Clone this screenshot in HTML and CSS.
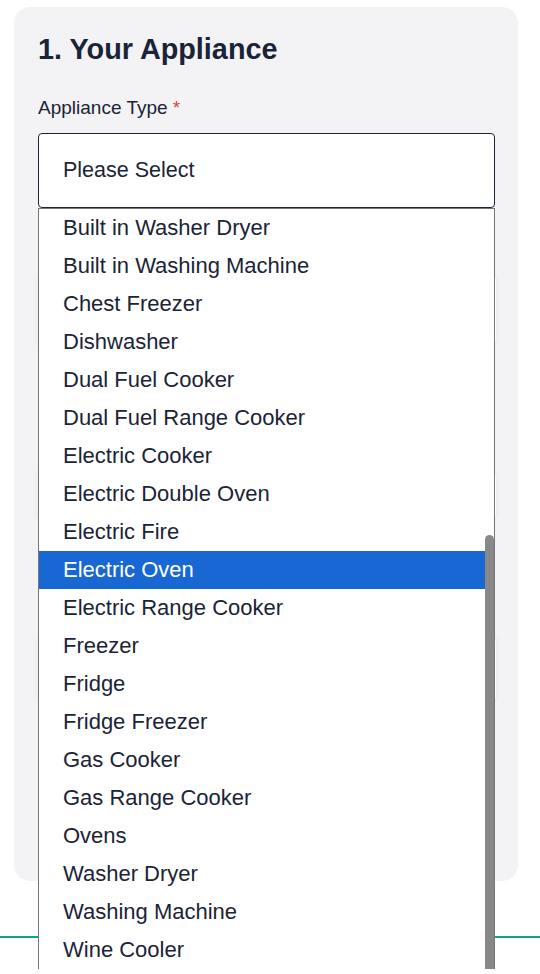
FILE: index.html
```html
<!DOCTYPE html>
<html lang="en">
<head>
<meta charset="utf-8">
<title>Your Appliance</title>
<link rel="stylesheet" href="styles.css">
</head>
<body>
<main class="page">
  <section class="card">
    <h2 class="card-title">1. Your Appliance</h2>
    <div class="field">
      <label class="field-label">Appliance Type <span class="req">*</span></label>
      <div class="select-wrap">
        <div class="select">Please Select</div>
        <ul class="listbox">
          <li class="opt">Built in Washer Dryer</li>
          <li class="opt">Built in Washing Machine</li>
          <li class="opt">Chest Freezer</li>
          <li class="opt">Dishwasher</li>
          <li class="opt">Dual Fuel Cooker</li>
          <li class="opt">Dual Fuel Range Cooker</li>
          <li class="opt">Electric Cooker</li>
          <li class="opt">Electric Double Oven</li>
          <li class="opt">Electric Fire</li>
          <li class="opt selected">Electric Oven</li>
          <li class="opt">Electric Range Cooker</li>
          <li class="opt">Freezer</li>
          <li class="opt">Fridge</li>
          <li class="opt">Fridge Freezer</li>
          <li class="opt">Gas Cooker</li>
          <li class="opt">Gas Range Cooker</li>
          <li class="opt">Ovens</li>
          <li class="opt">Washer Dryer</li>
          <li class="opt">Washing Machine</li>
          <li class="opt">Wine Cooler</li>
          <li class="thumb" aria-hidden="true"></li>
        </ul>
      </div>
    </div>
    <div class="ghost ghost-1"></div>
    <div class="ghost ghost-2"></div>
    <div class="ghost ghost-3"></div>
  </section>
  <div class="footer-rule"></div>
</main>
</body>
</html>
```

FILE: styles.css
```css
* { box-sizing: border-box; }
html, body {
  margin: 0;
  padding: 0;
  background: #ffffff;
}
body {
  font-family: "Liberation Sans", Arial, sans-serif;
  color: #1b2437;
  min-height: 974px;
  overflow: hidden;
}
.page {
  padding-top: 7px;
  min-height: 974px;
}
.card {
  margin: 0 22px 0 14px;
  background: #f3f3f5;
  border-radius: 16px;
  padding: 26px 24px 0 24px;
  height: 874px;
}
.card-title {
  margin: 0;
  font-size: 28.8px;
  line-height: 32px;
  font-weight: 700;
  color: #1b2437;
}
.field {
  margin-top: 32px;
}
.field-label {
  display: block;
  font-size: 19px;
  line-height: 22px;
  color: #1b2437;
}
.req {
  color: #d6453d;
}
.select-wrap {
  position: relative;
  margin-top: 14px;
  width: 457px;
  z-index: 5;
}
.select {
  height: 75px;
  border: 1px solid #1b2437;
  border-radius: 4px;
  background: #ffffff;
  padding-left: 24px;
  display: flex;
  align-items: center;
  font-size: 21.5px;
  color: #1b2437;
}
.listbox {
  position: absolute;
  top: 75px;
  left: 0;
  width: 457px;
  margin: 0;
  padding: 0;
  list-style: none;
  background: #ffffff;
  border: 1px solid #767676;
  border-bottom: none;
  height: 761px;
  overflow: hidden;
}
.opt {
  height: 38px;
  line-height: 38px;
  padding-left: 24px;
  font-size: 22px;
  color: #1b2437;
  white-space: nowrap;
}
.opt.selected {
  background: #1967d2;
  color: #ffffff;
}
.thumb {
  position: absolute;
  right: 0;
  top: 326px;
  width: 9px;
  height: 440px;
  background: #888888;
  border-radius: 5px 5px 0 0;
}
.ghost {
  height: 0;
  position: relative;
}
.ghost::before {
  content: "";
  position: absolute;
  left: 0;
  width: 458px;
  background: #ffffff;
  border-radius: 6px;
  box-shadow: 0 0 6px rgba(60, 60, 90, 0.07);
}
.ghost-1::before { top: 66px; height: 72px; }
.ghost-2::before { top: 262px; height: 50px; }
.ghost-3::before { top: 428px; height: 66px; }
.footer-rule {
  margin-top: 55px;
  height: 2px;
  background: #10a37f;
}
```
